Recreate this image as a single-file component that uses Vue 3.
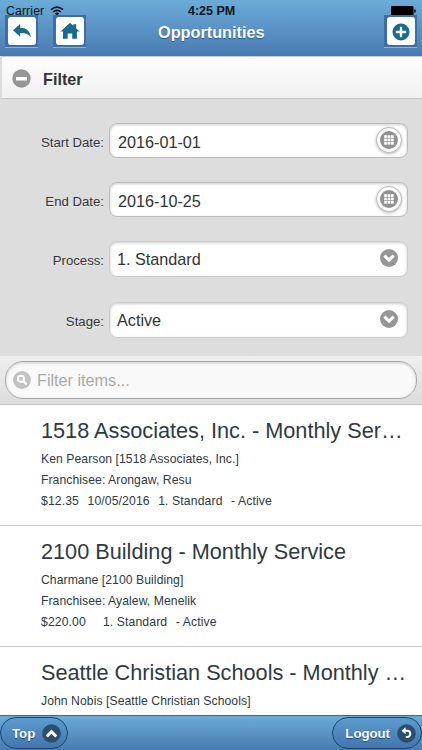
<script setup>
const fields = [
  { label: 'Start Date:', value: '2016-01-01', type: 'date' },
  { label: 'End Date:', value: '2016-10-25', type: 'date' },
  { label: 'Process:', value: '1. Standard', type: 'select' },
  { label: 'Stage:', value: 'Active', type: 'select' }
]
const items = [
  { title: '1518 Associates, Inc. - Monthly Ser…', contact: 'Ken Pearson [1518 Associates, Inc.]', franchisee: 'Arongaw, Resu', amount: '$12.35', date: '10/05/2016', process: '1. Standard', stage: '- Active' },
  { title: '2100 Building - Monthly Service', contact: 'Charmane [2100 Building]', franchisee: 'Ayalew, Menelik', amount: '$220.00', date: '', process: '1. Standard', stage: '- Active' },
  { title: 'Seattle Christian Schools - Monthly …', contact: 'John Nobis [Seattle Christian Schools]' }
]
const dots = [0, 1, 2, 3, 4, 5, 6, 7, 8]
</script>

<template>
  <div class="screen">
    <header class="header">
      <div class="status">
        <span class="carrier">Carrier</span>
        <svg class="wifi" width="14" height="10" viewBox="0 0 14 10">
          <path d="M1 3.7Q7-1.3 13 3.7M3.2 6Q7 2.8 10.8 6" fill="none" stroke="#0b1116" stroke-width="1.6" />
          <path d="M4.9 7.4Q7 5.7 9.1 7.4L7 9.7z" fill="#0b1116" />
        </svg>
        <span class="time">4:25 PM</span>
        <svg class="battery" width="25" height="10" viewBox="0 0 25 10">
          <rect x="0" y="0" width="22.5" height="10" rx="1" fill="#000" />
          <path d="M23 3.2q2 .2 2 1.8t-2 1.8z" fill="#10202c" />
        </svg>
      </div>
      <div class="nav">
        <span class="tool">
          <svg width="28" height="28" viewBox="0 0 28 28"><path d="M5 13.3 12.2 7v3.8c6 .1 9.6 3 10.7 9.2-2.8-3.4-5.8-4.2-10.7-4.1v3.8z" fill="#176b8f" /></svg>
        </span>
        <span class="tool">
          <svg width="28" height="28" viewBox="0 0 28 28"><path d="M14 5.8 17.3 8.8V7.2h2.9v4.2l3.3 3.2h-2.6v7.2h-4.7v-5.4h-4.5v5.4H7v-7.2H4.6z" fill="#176b8f" /></svg>
        </span>
        <h1>Opportunities</h1>
        <span class="tool last">
          <svg width="28" height="28" viewBox="0 0 28 28"><circle cx="14" cy="15" r="8.5" fill="#176b8f" /><path d="M14 9.8v10.4M8.8 15h10.4" stroke="#fff" stroke-width="2.3" /></svg>
        </span>
      </div>
    </header>

    <div class="collapse">
      <svg width="19" height="19" viewBox="0 0 19 19"><circle cx="9.5" cy="9.5" r="9.2" fill="#969696" /><rect x="4" y="8" width="11" height="3.4" rx=".5" fill="#fff" /></svg>
      <span>Filter</span>
    </div>

    <section class="filters">
      <div v-for="f in fields" :key="f.label" class="field">
        <label>{{ f.label }}</label>
        <div class="input" :class="f.type">
          <span>{{ f.value }}</span>
          <span v-if="f.type === 'date'" class="ring">
            <svg width="18" height="18" viewBox="0 0 18 18">
              <circle cx="9" cy="9" r="9" fill="#929292" />
              <rect v-for="d in dots" :key="d" :x="4.2 + (d % 3) * 3.4" :y="4.2 + Math.floor(d / 3) * 3.4" width="2.7" height="2.7" fill="#fff" />
            </svg>
          </span>
          <svg v-else class="arrow" width="18" height="18" viewBox="0 0 18 18"><circle cx="9" cy="9" r="9" fill="#969696" /><path d="M5.4 7.6 9 11.1l3.6-3.5" fill="none" stroke="#fff" stroke-width="3" stroke-linecap="square" stroke-linejoin="miter" /></svg>
        </div>
      </div>
    </section>

    <div class="searchbar">
      <div class="search">
        <svg width="18" height="18" viewBox="0 0 18 18"><circle cx="9" cy="9" r="9" fill="#c2c2c2" /><circle cx="8" cy="7.8" r="3.1" fill="none" stroke="#fff" stroke-width="2" /><path d="m10.4 10.2 3.2 3.2" stroke="#fff" stroke-width="2.4" /></svg>
        <span>Filter items...</span>
      </div>
    </div>

    <main class="list">
      <article v-for="item in items" :key="item.title" class="item">
        <h2>{{ item.title }}</h2>
        <p>{{ item.contact }}</p>
        <template v-if="item.franchisee">
          <p>Franchisee: {{ item.franchisee }}</p>
          <p class="meta">
            <span>{{ item.amount }}</span><span>{{ item.date }}</span><span>{{ item.process }}</span><span>{{ item.stage }}</span>
          </p>
        </template>
      </article>
    </main>

    <footer class="footer">
      <div class="pill">
        <span>Top</span>
        <svg width="19" height="19" viewBox="0 0 19 19"><circle cx="9.5" cy="9.5" r="9.3" fill="#294e6f" /><path d="m5.8 11.4 3.7-3.7 3.7 3.7" fill="none" stroke="#fff" stroke-width="3" stroke-linecap="square" /></svg>
      </div>
      <div class="pill logout">
        <span>Logout</span>
        <svg width="19" height="19" viewBox="0 0 19 19"><circle cx="9.5" cy="9.5" r="9.3" fill="#294e6f" /><path d="M8 6.8h2.2a3.1 3.1 0 0 1 0 6.2H8.8" fill="none" stroke="#fff" stroke-width="2" /><path d="M4.5 6.8 8.6 3.3v7z" fill="#fff" /></svg>
      </div>
    </footer>
  </div>
</template>

<style>
body { margin: 0; }
</style>

<style scoped>
* { box-sizing: border-box; }
.screen {
  width: 422px;
  height: 750px;
  overflow: hidden;
  display: flex;
  flex-direction: column;
  background: #fff;
  font-family: "Liberation Sans", Arial, sans-serif;
  color: #2f3437;
}
h1, h2, p { margin: 0; font-weight: normal; white-space: nowrap; }
svg { display: block; flex: none; }
.header {
  flex: none;
  height: 56px;
  background: linear-gradient(#6cabd8, #497bb2);
}
.status {
  height: 15px;
  display: grid;
  grid-template-columns: 44px 144px 1fr auto;
  padding: 5px 6px 0;
  font-size: 12.3px;
  line-height: 13px;
  color: #0b1620;
}
.carrier { letter-spacing: .1px; }
.wifi { margin: 1px 0 0; }
.time { font-weight: bold; font-size: 12.5px; margin-left: -6px; }
.battery { margin-top: 1px; }
.nav { display: flex; align-items: flex-start; padding: 0 6px 0 5px; }
.tool {
  flex: none;
  width: 33px;
  height: 33px;
  padding: 2px 2px 2px 3px;
  margin-right: 15px;
  background: #3d6ea6;
  border-bottom: 1px solid #8fb3d5;
}
.tool svg { background: #fff; border-radius: 3px; }
.tool.last { margin: 0 -1px 0 0; }
h1 {
  flex: 1;
  padding-left: 57px;
  font-weight: bold;
  font-size: 16.25px;
  line-height: 35px;
  color: #fff;
  text-shadow: 0 1px 1px #2c5c84;
}
.collapse {
  flex: none;
  height: 43px;
  margin-left: 2px;
  padding: 3px 0 0 10px;
  display: flex;
  align-items: center;
  gap: 12px;
  background: linear-gradient(#fdfdfd, #f1f1f1);
  border-top: 1px solid #ccc;
  border-bottom: 1px solid #c6c6c6;
  box-shadow: -2px 0 #ddd;
  font-weight: bold;
  font-size: 16.2px;
  text-shadow: 0 1px #fff;
}
.collapse svg { margin-top: -1px; }
.filters {
  flex: none;
  height: 257px;
  padding-top: 24px;
  background: #ddd;
}
.field { display: flex; align-items: flex-start; height: 59px; }
.field:nth-child(3) { height: 61px; }
.field label {
  width: 104px;
  margin-right: 5px;
  text-align: right;
  font-size: 13.2px;
  line-height: 40px;
  text-shadow: 0 1px #eee;
}
.input {
  display: flex;
  align-items: center;
  justify-content: space-between;
  width: 299px;
  height: 35px;
  padding: 3px 6px 0 8px;
  font-size: 16.2px;
  background: #fff;
  border: 1px solid #bbb;
  border-radius: 8px;
  box-shadow: inset 0 1px 3px #ccc;
}
.input.select { height: 36px; padding: 0 9px 0 7px; border-color: #ccc; }
.ring {
  display: grid;
  place-items: center;
  width: 26px;
  height: 26px;
  margin-top: -4px;
  margin-right: -1px;
  border: 1px solid #bbb;
  border-radius: 50%;
  background: #fff;
  box-shadow: 0 1px 3px #bbb;
}
.arrow { margin-top: -3px; }
.searchbar {
  flex: none;
  height: 49px;
  padding: 5px 5px 0;
  background: linear-gradient(#efefef, #dcdcdc);
  border-bottom: 1px solid #c9c9c9;
}
.search {
  height: 38px;
  display: flex;
  align-items: center;
  gap: 6px;
  padding-left: 7px;
  font-size: 16.2px;
  color: #aaa;
  background: #f9f9f9;
  border: 1px solid #a9a9a9;
  border-radius: 18px;
  box-shadow: inset 0 1px 3px #ccc;
}
.list { flex: 1; min-height: 0; overflow: hidden; }
.item {
  height: 121px;
  padding: 11px 0 0 41px;
  border-bottom: 1px solid #ccc;
  color: #2d3a44;
}
h2 { font-size: 21.7px; line-height: 30px; height: 32px; }
.item p { font-size: 12.2px; letter-spacing: .06px; line-height: 22px; height: 21px; }
.item .meta { display: flex; gap: 8.5px; letter-spacing: .12px; }
.footer {
  flex: none;
  height: 35px;
  display: flex;
  justify-content: space-between;
  padding-top: 1px;
  border-top: 1px solid #42678c;
  background: linear-gradient(#6cabd8, #497bb2);
}
.pill {
  height: 32px;
  display: flex;
  align-items: center;
  gap: 7px;
  padding: 0 6px 0 11px;
  border: 1px solid #17486f;
  border-radius: 16px;
  background: linear-gradient(#5d9bce, #4475ad);
  font-weight: bold;
  font-size: 13.2px;
  color: #fff;
  text-shadow: 0 1px 1px #194b7e;
}
.pill.logout { padding-left: 12px; padding-right: 5px; }
</style>
